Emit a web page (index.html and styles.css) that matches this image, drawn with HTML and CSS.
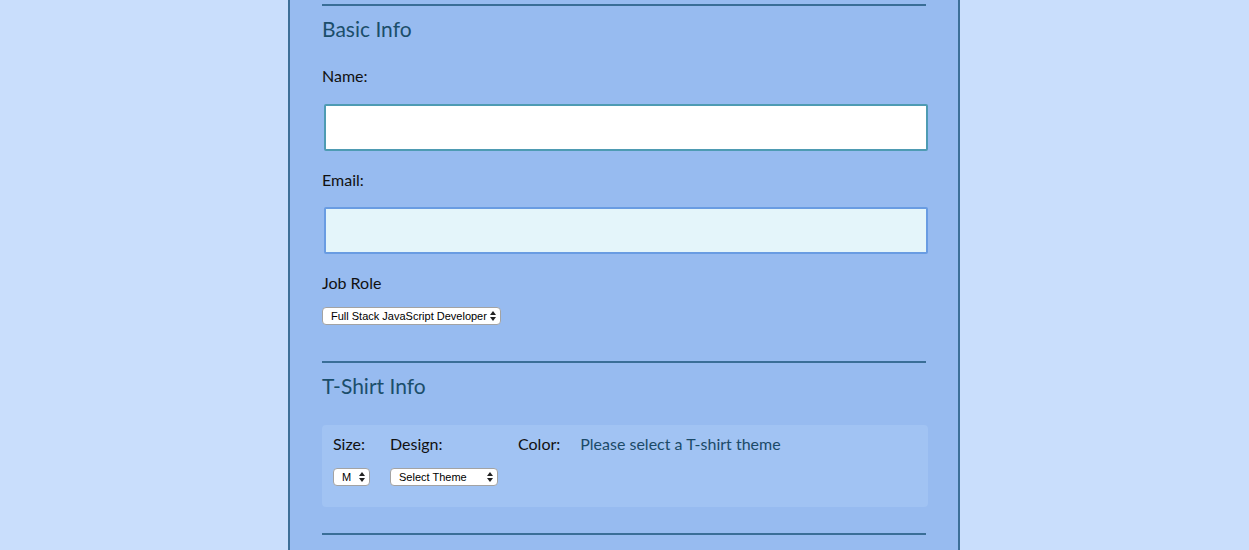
FILE: index.html
```html
<!DOCTYPE html>
<html lang="en">
<head>
<meta charset="utf-8">
<title>Register</title>
<link rel="stylesheet" href="styles.css">
</head>
<body>
<div class="container">
  <form class="form">
    <fieldset class="section">
      <h2 class="legend">Basic Info</h2>
      <label class="label label-name" for="name">Name:</label>
      <input class="text-input focused" id="name" type="text">
      <label class="label label-email" for="mail">Email:</label>
      <input class="text-input email" id="mail" type="email">
      <label class="label label-job" for="title">Job Role</label>
      <span class="select-wrap job">
        <select id="title" class="select"><option>Full Stack JavaScript Developer</option></select>
        <svg class="arrows" width="6" height="10" viewBox="0 0 6 10"><path d="M3 0 L6 4 L0 4 Z M0 6 L6 6 L3 10 Z" fill="#222"/></svg>
      </span>
    </fieldset>
    <fieldset class="section">
      <h2 class="legend">T-Shirt Info</h2>
      <div class="shirt-box">
        <div class="col">
          <label class="label small">Size:</label>
          <span class="select-wrap size">
            <select class="select"><option>M</option></select>
            <svg class="arrows" width="6" height="10" viewBox="0 0 6 10"><path d="M3 0 L6 4 L0 4 Z M0 6 L6 6 L3 10 Z" fill="#222"/></svg>
          </span>
        </div>
        <div class="col">
          <label class="label small">Design:</label>
          <span class="select-wrap design">
            <select class="select"><option>Select Theme</option></select>
            <svg class="arrows" width="6" height="10" viewBox="0 0 6 10"><path d="M3 0 L6 4 L0 4 Z M0 6 L6 6 L3 10 Z" fill="#222"/></svg>
          </span>
        </div>
        <div class="col color-col">
          <label class="label small">Color:</label>
          <span class="hint">Please select a T-shirt theme</span>
        </div>
      </div>
    </fieldset>
    <fieldset class="section last"></fieldset>
  </form>
</div>
</body>
</html>
```
FILE: styles.css
```css
html, body {
  margin: 0;
  padding: 0;
  background: #c9defc;
  height: 100%;
  overflow: hidden;
}
body {
  font-family: Lato, "Noto Sans", sans-serif;
  color: #111;
}
.container {
  margin: 0 0 0 288px;
  min-height: 550px;
  background: #97bbf0;
  border-left: 2px solid #3d6f98;
  border-right: 2px solid #3d6f98;
  padding: 4px 32px 0;
  box-sizing: content-box;
  width: 604px;
}
.form { margin: 0; }
.section {
  margin: 0;
  padding: 0;
  min-width: 0;
  width: 604px;
  box-sizing: border-box;
  border: 0;
  border-top: 2px solid #3a6e97;
  display: flex;
  flex-direction: column;
  align-items: flex-start;
}
.section.last { height: 20px; }
.legend {
  margin: 10px 0 0;
  font-size: 21px;
  line-height: 25px;
  font-weight: 400;
  color: #1b4e6b;
}
.label {
  display: block;
  font-size: 16px;
  line-height: 20px;
  color: #111;
}
.label-name { margin-top: 25px; }
.label-email { margin-top: 19px; }
.label-job { margin-top: 19px; }
.text-input {
  flex: none;
  margin: 18px 0 0 2px;
  width: 604px;
  height: 47px;
  box-sizing: border-box;
  border: 2px solid #4e9bb3;
  border-radius: 2px;
  background: #fff;
  font-family: inherit;
  font-size: 16px;
  padding: 0 10px;
}
.text-input.email {
  margin-top: 17px;
  border-color: #699ce2;
  background: #e4f5fa;
}
.select-wrap {
  position: relative;
  display: inline-block;
}
.select-wrap.job { margin-top: 14px; margin-bottom: 36px; }
.select {
  -webkit-appearance: none;
  appearance: none;
  display: block;
  height: 18px;
  box-sizing: border-box;
  border: 1px solid #a3a3a3;
  border-radius: 4px;
  background: #fff;
  font-family: "Liberation Sans", Arial, sans-serif;
  font-size: 11px;
  color: #000;
  padding: 0 0 0 8px;
  line-height: 16px;
}
.job .select { width: 179px; }
.size .select { width: 37px; }
.design .select { width: 108px; }
.arrows {
  position: absolute;
  right: 5px;
  top: 4px;
  pointer-events: none;
}
.shirt-box {
  flex: none;
  margin: 27px 0 26px 0;
  width: 606px;
  height: 82px;
  box-sizing: border-box;
  background: #a1c3f3;
  border-radius: 4px;
  padding: 9px 11px;
  display: flex;
  gap: 20px;
}
.col {
  display: flex;
  flex-direction: column;
  align-items: flex-start;
}
.col .select-wrap { margin-top: 14px; }
.color-col {
  flex-direction: row;
  gap: 20px;
}
.hint {
  font-size: 16px;
  line-height: 20px;
  color: #1b4a68;
}
```
